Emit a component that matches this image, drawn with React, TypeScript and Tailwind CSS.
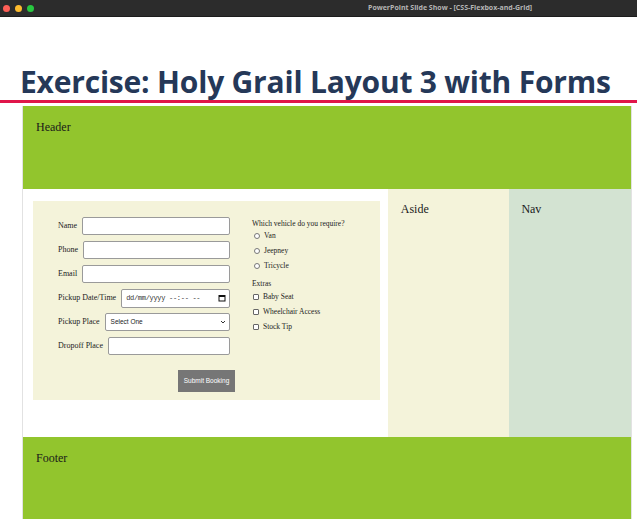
import React from 'react';

const serif = { fontFamily: '"Liberation Serif", "Times New Roman", serif' };

const Field = ({ label, children }: { label: string; children: React.ReactNode }) => (
  <div className="flex items-center gap-[5px] h-[18px]">
    <span className="text-[8px] text-[#222] whitespace-nowrap">{label}</span>
    {children}
  </div>
);

const TextBox = () => (
  <div className="flex-1 h-[18px] bg-white border border-[#9a9a9a] rounded-[2px]" />
);

const Radio = ({ label }: { label: string }) => (
  <div className="flex items-center gap-[4px] h-[15px]">
    <span className="w-[6px] h-[6px] rounded-full border border-[#777] bg-white ml-[2px]" />
    <span>{label}</span>
  </div>
);

const Check = ({ label }: { label: string }) => (
  <div className="flex items-center gap-[4px] h-[15px]">
    <span className="w-[6px] h-[6px] rounded-[1px] border border-[#666] bg-white ml-[1px]" />
    <span>{label}</span>
  </div>
);

export default function App() {
  return (
    <div className="w-[637px] h-[525px] bg-white flex flex-col overflow-hidden">
      {/* window chrome */}
      <div className="h-[17px] bg-[#2c2c2c] flex items-center border-b border-[#1c1c1c]">
        <div className="flex gap-[5px] pl-[3px]">
          <span className="w-[7px] h-[7px] rounded-full bg-[#fe5f57]" />
          <span className="w-[7px] h-[7px] rounded-full bg-[#febc2e]" />
          <span className="w-[7px] h-[7px] rounded-full bg-[#28c840]" />
        </div>
        <span
          className="ml-[334px] text-[7px] font-bold text-[#b5b5b5]"
          style={{ fontFamily: '"Open Sans", sans-serif' }}
        >
          PowerPoint Slide Show - [CSS-Flexbox-and-Grid]
        </span>
      </div>

      {/* slide title */}
      <div className="h-[83px] flex items-end pl-[20px]">
        <h1
          className="text-[30px] font-bold leading-none text-[#253858] pb-[3px] tracking-[-0.2px]"
          style={{ fontFamily: '"Open Sans", sans-serif' }}
        >
          Exercise: Holy Grail Layout 3 with Forms
        </h1>
      </div>
      <div className="h-[3px] bg-[#e0164a]" />

      {/* page */}
      <div className="mt-[3px] ml-[22px] w-[610px] h-[413px] flex flex-col border-x border-[#e2e2e2]" style={serif}>
        <header className="h-[83px] bg-[#92c52d] px-[13px] pt-[12px] text-[12px] text-[#1a1a1a]">Header</header>

        <div className="h-[248px] flex">
          <section className="w-[366px] bg-white pl-[10px] pr-[8px] pt-[12px]">
            <form className="h-[199px] bg-[#f4f3da] flex pl-[25px] pt-[16px]">
              <div className="w-[172px] flex flex-col gap-[6px]">
                <Field label="Name"><TextBox /></Field>
                <Field label="Phone"><TextBox /></Field>
                <Field label="Email"><TextBox /></Field>
                <Field label="Pickup Date/Time">
                  <div className="flex-1 h-[19px] bg-white border border-[#9a9a9a] rounded-[2px] flex items-center pl-[4px] pr-[3px] text-[7px] text-[#333]" style={{ fontFamily: '"Liberation Mono", monospace' }}>
                    <span className="flex-1 tracking-[-0.3px]">dd/mm/yyyy --:-- --</span>
                    <svg width="8" height="8" viewBox="0 0 8 8">
                      <rect x="1" y="1.5" width="6" height="5.5" fill="none" stroke="#111" strokeWidth="1" />
                      <rect x="1" y="1.5" width="6" height="1.5" fill="#111" />
                    </svg>
                  </div>
                </Field>
                <Field label="Pickup Place">
                  <div className="flex-1 h-[18px] bg-white border border-[#9a9a9a] rounded-[2px] flex items-center pl-[5px] pr-[3px] text-[6.5px] text-[#222]" style={{ fontFamily: '"Liberation Sans", Arial, sans-serif' }}>
                    <span className="flex-1">Select One</span>
                    <svg width="6" height="6" viewBox="0 0 6 6">
                      <path d="M1 2 L3 4 L5 2" fill="none" stroke="#333" strokeWidth="1" />
                    </svg>
                  </div>
                </Field>
                <Field label="Dropoff Place"><TextBox /></Field>
                <div className="flex justify-end mt-[9px] -mr-[5px]">
                  <button
                    type="button"
                    className="w-[57px] h-[22px] bg-[#767676] text-white text-[6.5px]"
                    style={{ fontFamily: '"Liberation Sans", Arial, sans-serif' }}
                  >
                    Submit Booking
                  </button>
                </div>
              </div>

              <div className="ml-[22px] pt-[1px] text-[7.5px] text-[#222] flex flex-col">
                <span className="h-[10px]">Which vehicle do you require?</span>
                <Radio label="Van" />
                <Radio label="Jeepney" />
                <Radio label="Tricycle" />
                <span className="h-[12px] mt-[4px] flex items-end">Extras</span>
                <Check label="Baby Seat" />
                <Check label="Wheelchair Access" />
                <Check label="Stock Tip" />
              </div>
            </form>
          </section>
          <aside className="w-[122px] bg-[#f4f3da] pl-[13px] pt-[11px] text-[12px] text-[#1a1a1a]">Aside</aside>
          <nav className="w-[122px] bg-[#d3e3d2] pl-[12px] pt-[11px] text-[12px] text-[#1a1a1a]">Nav</nav>
        </div>

        <footer className="h-[82px] bg-[#92c52d] px-[13px] pt-[12px] text-[12px] text-[#1a1a1a]">Footer</footer>
      </div>
    </div>
  );
}
